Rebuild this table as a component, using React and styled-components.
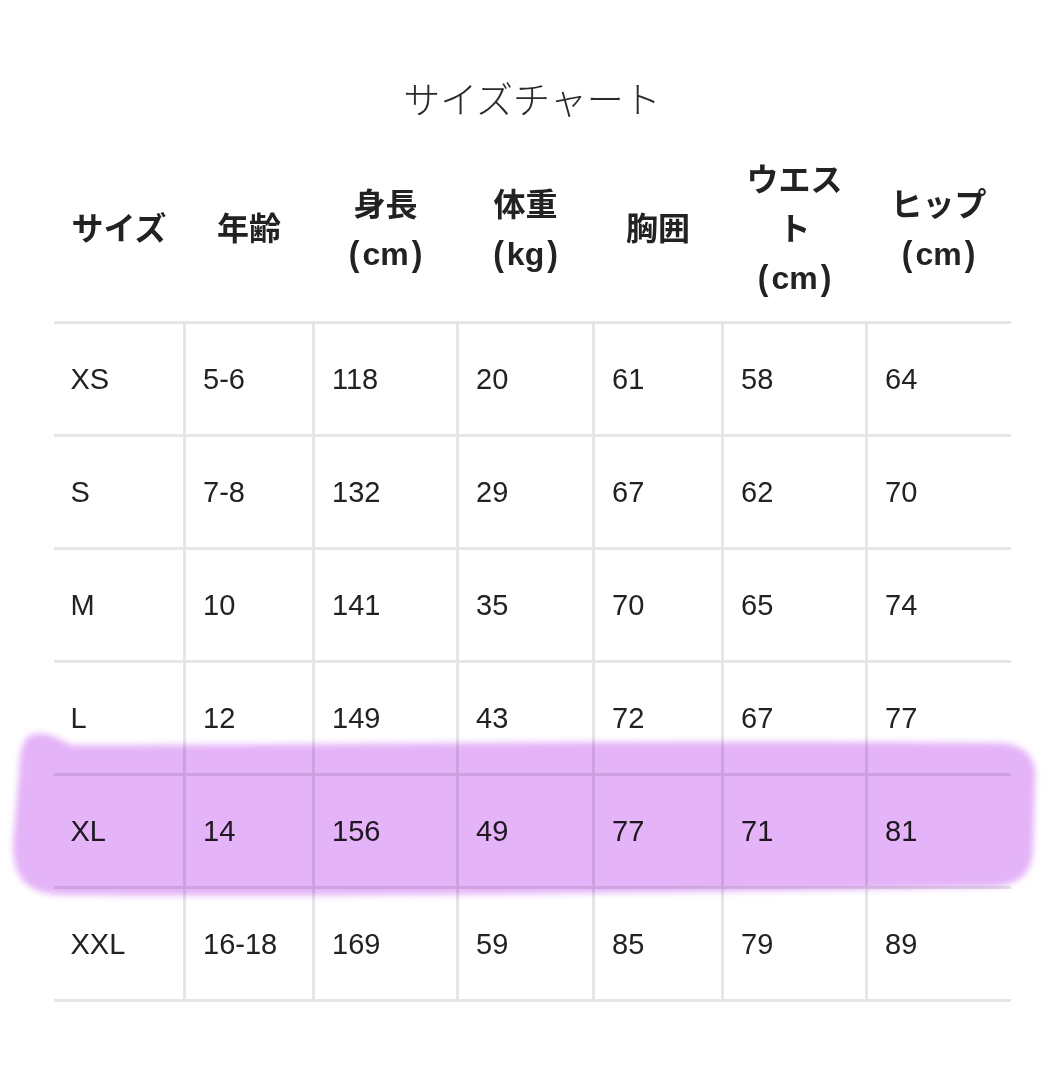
import styled, { createGlobalStyle } from "styled-components";

const GlobalStyle = createGlobalStyle`
  html, body {
    margin: 0;
    padding: 0;
    background: #ffffff;
  }
  body {
    font-family: "Liberation Sans", "Noto Sans CJK JP", sans-serif;
    color: #222222;
  }
`;

const columns = [
  { label: ["サイズ"], width: 131 },
  { label: ["年齢"], width: 129 },
  { label: ["身長"], unit: "cm", width: 144 },
  { label: ["体重"], unit: "kg", width: 136 },
  { label: ["胸囲"], width: 129 },
  { label: ["ウエス", "ト"], unit: "cm", width: 144 },
  { label: ["ヒップ"], unit: "cm", width: 144 },
];

const rows = [
  ["XS", "5-6", "118", "20", "61", "58", "64"],
  ["S", "7-8", "132", "29", "67", "62", "70"],
  ["M", "10", "141", "35", "70", "65", "74"],
  ["L", "12", "149", "43", "72", "67", "77"],
  ["XL", "14", "156", "49", "77", "71", "81"],
  ["XXL", "16-18", "169", "59", "85", "79", "89"],
];

export default function App() {
  return (
    <>
      <GlobalStyle />
      <Page>
        <Title>サイズチャート</Title>
        <TableWrap>
          <Table>
            <colgroup>
              {columns.map((c, i) => (
                <Col key={i} $w={c.width} />
              ))}
            </colgroup>
            <thead>
              <tr>
                {columns.map((c, i) => (
                  <Th key={i}>
                    {c.label.map((line, j) => (
                      <div key={j}>{line}</div>
                    ))}
                    {c.unit && (
                      <div>
                        <Paren>(</Paren>
                        {c.unit}
                        <Paren>)</Paren>
                      </div>
                    )}
                  </Th>
                ))}
              </tr>
            </thead>
            <tbody>
              {rows.map((r, i) => (
                <tr key={i}>
                  {r.map((v, j) => (
                    <Td key={j} $first={j === 0}>
                      {v}
                    </Td>
                  ))}
                </tr>
              ))}
            </tbody>
          </Table>
          <Highlight viewBox="0 0 1064 180" preserveAspectRatio="none">
            <defs>
              <filter id="soft" x="-5%" y="-20%" width="110%" height="140%">
                <feGaussianBlur stdDeviation="3" />
              </filter>
            </defs>
            <path
              filter="url(#soft)"
              fill="#e4b3f8"
              d="M 30 12 C 42 8, 52 12, 70 22 C 300 22, 700 16, 1000 20 C 1030 22, 1036 40, 1034 60 L 1032 128 C 1030 150, 1020 162, 990 164 C 700 170, 300 174, 60 172 C 22 170, 12 152, 12 120 L 18 50 C 18 28, 22 16, 30 12 Z"
            />
          </Highlight>
        </TableWrap>
      </Page>
    </>
  );
}

const Page = styled.div`
  width: 1064px;
  padding-top: 76px;
  display: flex;
  flex-direction: column;
  align-items: center;
`;

const Title = styled.h1`
  margin: 0 0 36px;
  font-family: "Noto Sans CJK JP", sans-serif;
  font-weight: 300;
  font-size: 37px;
  line-height: 44px;
  color: #2a2a2a;
`;

const TableWrap = styled.div`
  position: relative;
  width: 957px;
`;

const Table = styled.table`
  width: 957px;
  border-collapse: collapse;
  table-layout: fixed;
`;

const Col = styled.col`
  width: ${(p) => p.$w}px;
`;

const Th = styled.th`
  padding: 0 0 18px;
  height: 147px;
  font-family: "Liberation Sans", "Noto Sans CJK JP", sans-serif;
  font-weight: 700;
  font-size: 32px;
  line-height: 49px;
  color: #222222;
  text-align: center;
  vertical-align: middle;
  border-bottom: 3px solid #e6e6e6;
`;

const Paren = styled.span`
  display: inline-block;
  padding: 0 3px;
  transform: scaleY(1.1);
`;

const Td = styled.td`
  height: 110px;
  padding: 0 0 0 17px;
  font-size: 29px;
  color: #222222;
  text-align: left;
  vertical-align: middle;
  border-bottom: 3px solid #e6e6e6;
  border-left: ${(p) => (p.$first ? "none" : "3px solid #e6e6e6")};
`;

const Highlight = styled.svg`
  position: absolute;
  left: -53px;
  top: 567px;
  width: 1064px;
  height: 180px;
  mix-blend-mode: multiply;
  pointer-events: none;
`;
